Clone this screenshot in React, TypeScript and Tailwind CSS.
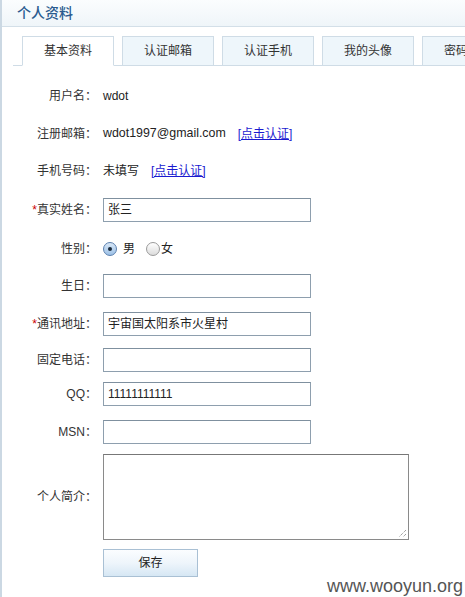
import React from "react";

const font = { fontFamily: '"Liberation Sans", "Noto Sans CJK SC", sans-serif' };

function Label({ text, required }: { text: string; required?: boolean }) {
  return (
    <div className="w-[95px] shrink-0 text-right text-[12px] text-[#333] pr-0">
      {required && <span className="text-[#cc0000]">*</span>}
      {text}：
    </div>
  );
}

function Input({ value }: { value?: string }) {
  return (
    <div className="ml-[6px] h-[24px] w-[208px] border border-[#8e9fae] border-t-[#7f909f] bg-white pl-[4px] flex items-center text-[12px] text-[#222]">
      {value}
    </div>
  );
}

function Radio({ checked }: { checked?: boolean }) {
  return checked ? (
    <div className="w-[14px] h-[14px] rounded-full border border-[#5a7fae] bg-gradient-to-b from-[#d9e8f7] to-[#9cc0e6] flex items-center justify-center">
      <div className="w-[4px] h-[4px] rounded-full bg-[#1a2a3a]" />
    </div>
  ) : (
    <div className="w-[14px] h-[14px] rounded-full border border-[#9a9a9a] bg-gradient-to-b from-[#ffffff] to-[#dcdcdc]" />
  );
}

export default function App() {
  const tabs = ["基本资料", "认证邮箱", "认证手机", "我的头像", "密码修改"];
  return (
    <div
      className="relative w-[465px] h-[597px] overflow-hidden bg-white border-l-2 border-[#cbd8e3]"
      style={font}
    >
      <div className="h-[27px] border-b border-[#d3dfe8] bg-gradient-to-b from-[#fbfdfe] to-[#eff5f9] pl-[15px] flex items-center">
        <span className="text-[14px] text-[#2a5b8f] leading-none font-medium">个人资料</span>
      </div>

      <div className="pt-[10px] ml-[11px]">
        <div className="flex gap-[8px] pl-[9px] border-b border-[#cfdce6] h-[29px] items-end w-[700px]">
          {tabs.map((t, i) => (
            <div
              key={t}
              className={
                "w-[92px] shrink-0 h-[29px] border border-[#cfdce6] flex items-center justify-center text-[12px] text-[#333] " +
                (i === 0 ? "bg-white border-b-white mb-[-1px] h-[30px]" : "bg-[#eef6fb] border-b-0")
              }
            >
              {t}
            </div>
          ))}
        </div>
      </div>

      <div className="pt-[11px] text-[12px] text-[#222]">
        <div className="h-[38px] flex items-center">
          <Label text="用户名" />
          <div className="ml-[6px]">wdot</div>
        </div>
        <div className="h-[37px] flex items-center">
          <Label text="注册邮箱" />
          <div className="ml-[6px] text-[12.4px]">wdot1997@gmail.com</div>
          <a className="ml-[12px] text-[#1a1ad0] underline">[点击认证]</a>
        </div>
        <div className="h-[38px] flex items-center">
          <Label text="手机号码" />
          <div className="ml-[6px]">未填写</div>
          <a className="ml-[12px] text-[#1a1ad0] underline">[点击认证]</a>
        </div>
        <div className="h-[39px] flex items-center">
          <Label text="真实姓名" required />
          <Input value="张三" />
        </div>
        <div className="h-[40px] flex items-center">
          <Label text="性别" />
          <div className="ml-[6px] flex items-center">
            <Radio checked />
            <span className="ml-[6px]">男</span>
            <span className="ml-[11px]">
              <Radio />
            </span>
            <span className="ml-[1px]">女</span>
          </div>
        </div>
        <div className="h-[34px] flex items-center">
          <Label text="生日" />
          <Input />
        </div>
        <div className="h-[41px] flex items-center">
          <Label text="通讯地址" required />
          <Input value="宇宙国太阳系市火星村" />
        </div>
        <div className="h-[31px] flex items-center">
          <Label text="固定电话" />
          <Input />
        </div>
        <div className="h-[37px] flex items-center">
          <Label text="QQ" />
          <Input value="11111111111" />
        </div>
        <div className="h-[39px] flex items-center">
          <Label text="MSN" />
          <Input />
        </div>
        <div className="mt-[3px] h-[86px] flex items-center">
          <Label text="个人简介" />
          <div className="relative ml-[6px] h-[86px] w-[306px] border border-[#8a8a8a] border-t-[#777] bg-white">
            <svg className="absolute right-[1px] bottom-[1px]" width="9" height="9" viewBox="0 0 9 9">
              <line x1="8" y1="1" x2="1" y2="8" stroke="#777" strokeWidth="1" strokeDasharray="1 1" />
              <line x1="8" y1="5" x2="5" y2="8" stroke="#777" strokeWidth="1" strokeDasharray="1 1" />
            </svg>
          </div>
        </div>
        <div className="mt-[9px] flex">
          <div className="ml-[101px] w-[95px] h-[28px] border border-[#a9c0d4] bg-gradient-to-b from-[#fbfdff] via-[#eef5fb] to-[#d6e7f4] flex items-center justify-center text-[12px] text-[#222]">
            保存
          </div>
        </div>
      </div>

      <div className="absolute right-[2px] bottom-[0px] text-[18px] text-[#555] leading-[22px]" style={{ fontFamily: '"Liberation Sans", sans-serif' }}>
        www.wooyun.org
      </div>
    </div>
  );
}
